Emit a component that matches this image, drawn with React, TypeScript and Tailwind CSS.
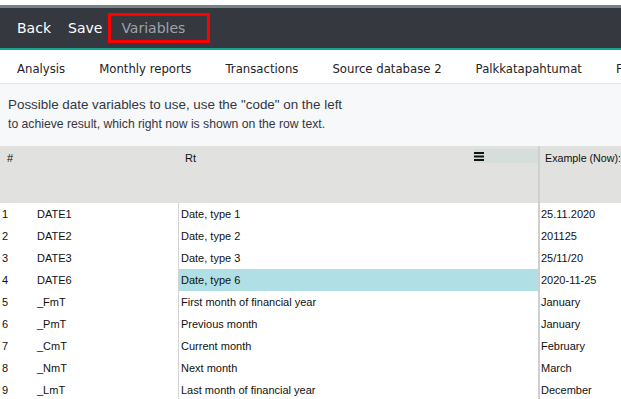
const tabs = ['Analysis', 'Monthly reports', 'Transactions', 'Source database 2', 'Palkkatapahtumat', 'Final']

const rows = [
  { code: 'DATE1', rt: 'Date, type 1', example: '25.11.2020' },
  { code: 'DATE2', rt: 'Date, type 2', example: '201125' },
  { code: 'DATE3', rt: 'Date, type 3', example: '25/11/20' },
  { code: 'DATE6', rt: 'Date, type 6', example: '2020-11-25' },
  { code: '_FmT', rt: 'First month of financial year', example: 'January' },
  { code: '_PmT', rt: 'Previous month', example: 'January' },
  { code: '_CmT', rt: 'Current month', example: 'February' },
  { code: '_NmT', rt: 'Next month', example: 'March' },
  { code: '_LmT', rt: 'Last month of financial year', example: 'December' },
]

export default function App() {
  return (
    <div className="h-[399px] w-[621px] overflow-hidden bg-white font-['DejaVu_Sans',sans-serif] text-[#222]">
      {/* Top bar */}
      <div className="mt-[5px] h-[3px] bg-[#76838a]" />
      <div className="flex h-[40px] items-center bg-[#35393f] pl-[17px] text-[14px] text-white">
        <span>Back</span>
        <span className="ml-[17px]">Save</span>
        <div className="ml-[6px] flex h-[30px] w-[102px] items-center border-[3px] border-[#f00] pl-[10px] text-[#9ea3a8]">
          Variables
        </div>
      </div>
      <div className="h-[2px] bg-[#17a398]" />

      {/* Tabs */}
      <div className="flex h-[34px] items-center overflow-hidden whitespace-nowrap border-b border-[#e2e5ea] pt-[6px] text-[11.7px] text-[#1f2228]">
        {tabs.map((t) => (
          <span key={t} className="shrink-0 px-[17px]">
            {t}
          </span>
        ))}
      </div>

      {/* Description */}
      <div className="h-[62px] bg-[#f7f8fa] px-[8px] pt-[11px] font-['Liberation_Sans',sans-serif] text-[#33373d]">
        <p className="text-[13.4px] leading-[19px]">
          Possible date variables to use, use the "code" on the left
        </p>
        <p className="mt-[2px] text-[12.2px] leading-[16px]">
          to achieve result, which right now is shown on the row text.
        </p>
      </div>

      {/* Table */}
      <div className="font-['Liberation_Sans',sans-serif] text-[11px] text-[#111]">
        <div className="grid h-[57px] grid-cols-[178px_360px_1fr] bg-[#e1e1df]">
          <div className="pl-[7px] pt-[4px]">#</div>
          <div className="flex items-start pt-[3px]">
            <span className="pl-[7px] pt-px">Rt</span>
            <div className="ml-auto flex h-[14px] w-[65px] items-center bg-[#d6dedc] pl-[1px]">
              <svg width="10" height="9" viewBox="0 0 10 9">
                <rect x="0" y="0" width="10" height="2" fill="#111" />
                <rect x="0" y="3.5" width="10" height="2" fill="#111" />
                <rect x="0" y="7" width="10" height="2" fill="#111" />
              </svg>
            </div>
          </div>
          <div className="whitespace-nowrap border-l-2 border-[#cfcfcf] pl-[5px] pt-[4px] text-[10.7px]">
            Example (Now):
          </div>
        </div>
        {rows.map((r, i) => (
          <div key={r.code} className="grid h-[22px] grid-cols-[35px_143px_360px_1fr] items-center">
            <div className="pl-[2px]">{i + 1}</div>
            <div className="pl-[2px]">{r.code}</div>
            <div
              className={`flex h-full items-center border-l border-[#d4d4d4] pl-[2px] ${
                i === 3 ? 'bg-[#b0e0e6]' : ''
              }`}
            >
              {r.rt}
            </div>
            <div className="flex h-full items-center whitespace-nowrap border-l-2 border-[#cfcfcf] pl-[1px]">
              {r.example}
            </div>
          </div>
        ))}
      </div>
    </div>
  )
}
